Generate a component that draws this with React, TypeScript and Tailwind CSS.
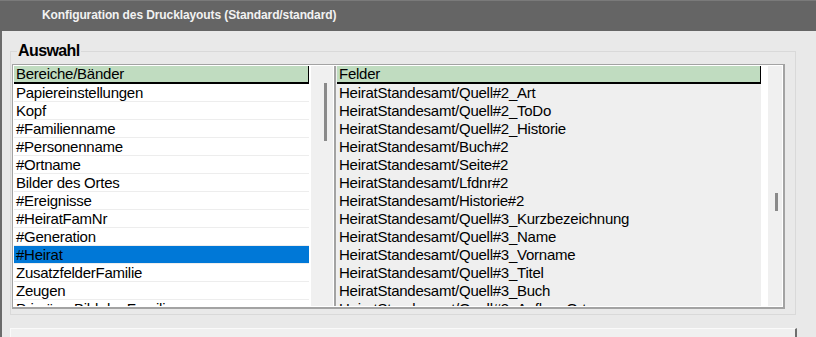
import React from "react";

const bereiche = [
  "Papiereinstellungen",
  "Kopf",
  "#Familienname",
  "#Personenname",
  "#Ortname",
  "Bilder des Ortes",
  "#Ereignisse",
  "#HeiratFamNr",
  "#Generation",
  "#Heirat",
  "ZusatzfelderFamilie",
  "Zeugen",
  "PrimäresBild der Familie",
];

const felder = [
  "HeiratStandesamt/Quell#2_Art",
  "HeiratStandesamt/Quell#2_ToDo",
  "HeiratStandesamt/Quell#2_Historie",
  "HeiratStandesamt/Buch#2",
  "HeiratStandesamt/Seite#2",
  "HeiratStandesamt/Lfdnr#2",
  "HeiratStandesamt/Historie#2",
  "HeiratStandesamt/Quell#3_Kurzbezeichnung",
  "HeiratStandesamt/Quell#3_Name",
  "HeiratStandesamt/Quell#3_Vorname",
  "HeiratStandesamt/Quell#3_Titel",
  "HeiratStandesamt/Quell#3_Buch",
  "HeiratStandesamt/Quell#3_AuflageOrt",
];

const selected = "#Heirat";

const App = () => {
  return (
    <div
      className="w-[816px] h-[337px] overflow-hidden bg-[#e9e9e9] flex flex-col"
      style={{ fontFamily: '"Liberation Sans", Arial, sans-serif' }}
    >
      {/* title bar */}
      <div className="h-[31px] shrink-0 bg-[#656565] border-t border-[#7a7a7a] flex items-center pl-[42px] pb-[2px]">
        <span className="text-[12px] font-bold text-[#f2f2f2] tracking-[-0.1px]">
          Konfiguration des Drucklayouts (Standard/standard)
        </span>
      </div>

      <div className="flex-1 border-l-2 border-[#6b6b6b] pl-[8px] pt-[12px] flex flex-col">
        <fieldset className="w-[786px] h-[272px] border border-[#d9d9d9] px-px pb-[5px] flex flex-col">
          <legend className="ml-[5px] px-px text-[16px] leading-[16px] font-bold tracking-[-0.6px] text-black">
            Auswahl
          </legend>

          <div className="mt-[5px] w-[773px] h-[245px] bg-white border-t border-l border-r-2 border-b-2 border-[#a3a3a3] flex p-px overflow-hidden">
            {/* left list */}
            <div className="w-[320px] flex shrink-0">
              <div className="w-[295px] flex flex-col overflow-hidden">
                <div className="h-[18px] shrink-0 bg-[#c0dcc0] border-r border-b-2 border-black pl-[2px] text-[15px] leading-[16px] tracking-[-0.25px] text-black">
                  Bereiche/Bänder
                </div>
                {bereiche.map((b) => (
                  <div
                    key={b}
                    className={`h-[18px] shrink-0 border-b border-[#ededed] pl-[2px] text-[15px] leading-[17px] tracking-[-0.25px] text-black whitespace-nowrap ${
                      b === selected ? "bg-[#0078d7]" : "bg-white"
                    }`}
                  >
                    {b}
                  </div>
                ))}
              </div>
              <div className="w-[2px] bg-white" />
              <div className="w-[22px] bg-[#f0f0f0] pl-[13px] pt-[17px]">
                <div className="w-[3px] h-[58px] bg-[#8a8a8a]" />
              </div>
            </div>

            {/* divider */}
            <div className="w-[2px] shrink-0 bg-[#a3a3a3]" />
            <div className="w-[1px] shrink-0 bg-[#f0f0f0]" />

            {/* right list */}
            <div className="flex-1 flex">
              <div className="w-[424px] flex flex-col overflow-hidden bg-[#efefef]">
                <div className="h-[18px] shrink-0 bg-[#c0dcc0] border-r border-b-2 border-black pl-[2px] text-[15px] leading-[16px] tracking-[-0.25px] text-black">
                  Felder
                </div>
                {felder.map((f) => (
                  <div
                    key={f}
                    className="h-[18px] shrink-0 pl-[2px] text-[15px] leading-[17px] tracking-[-0.25px] text-black whitespace-nowrap"
                  >
                    {f}
                  </div>
                ))}
              </div>
              <div className="w-[7px] bg-white" />
              <div className="flex-1 bg-[#f0f0f0] pl-[7px] pt-[127px]">
                <div className="w-[3px] h-[18px] bg-[#8a8a8a]" />
              </div>
            </div>
          </div>
        </fieldset>

        {/* bottom panel */}
        <div className="mt-[13px] w-[787px] flex-1 bg-[#f0f0f0] border-t border-l border-[#fafafa] border-r-2 border-r-[#6e6e6e]" />
      </div>
    </div>
  );
};

export default App;
